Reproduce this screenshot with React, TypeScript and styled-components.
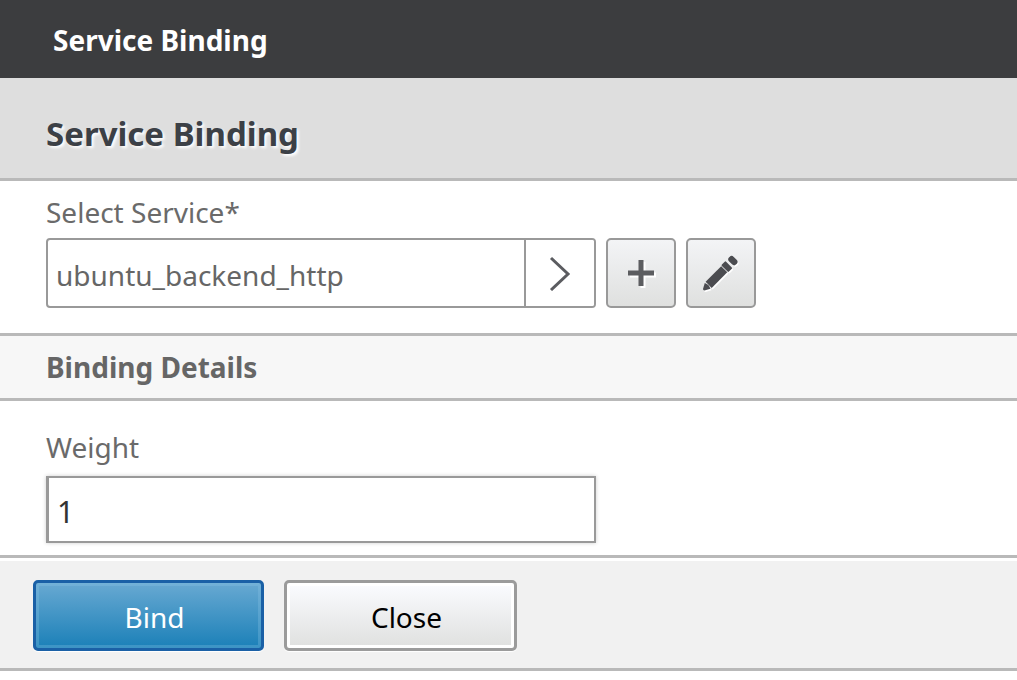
import React from 'react';
import styled, { createGlobalStyle } from 'styled-components';

const GlobalStyle = createGlobalStyle`
  *, *::before, *::after { box-sizing: border-box; }
  body {
    margin: 0;
    background: #fff;
    color: #666;
    font-family: 'Segoe UI', 'Noto Sans', sans-serif;
    font-size: 28px;
    line-height: 38px;
  }
  h1, h2, p { margin: 0; }
  button, input { font: inherit; }
`;

const TopBar = styled.header`
  padding: 21px 53px 19px;
  background: #3c3d3f;
  color: #fff;
  font-size: 28px;
  font-weight: 700;
`;

const TitleBand = styled.div`
  padding: 32px 46px 20px;
  background: #dedede;
  border-bottom: 3px solid #b9b9b9;
`;

const Title = styled.h1`
  color: #3c4046;
  font-size: 33px;
  font-weight: 700;
  line-height: 48px;
  text-shadow: 2px 2px 3px #fff;
`;

const Section = styled.section<{ $top: number; $gap: number; $bottom: number }>`
  display: flex;
  flex-direction: column;
  align-items: flex-start;
  gap: ${(p) => p.$gap}px;
  padding: ${(p) => p.$top}px 46px ${(p) => p.$bottom}px;
  border-bottom: 3px solid #b9b9b9;
`;

const Label = styled.label`
  color: #6a6a6a;
`;

const FieldRow = styled.div`
  display: flex;
  gap: 10px;
`;

const Picker = styled.div`
  display: flex;
  width: 550px;
  height: 70px;
  border: 2px solid #999;
  border-radius: 4px;
  background: #fff;
  overflow: hidden;
`;

const PickerInput = styled.input`
  flex: 1;
  min-width: 0;
  padding: 4px 8px 0;
  border: 0;
  background: transparent;
  color: #666;
  outline: none;
`;

const PickerButton = styled.button`
  display: grid;
  place-items: center;
  width: 70px;
  padding: 0;
  border: 0;
  border-left: 2px solid #999;
  background: #fff;
`;

const IconButton = styled.button`
  display: grid;
  place-items: center;
  width: 70px;
  height: 70px;
  padding: 0;
  border: 2px solid #999;
  border-radius: 5px;
  background: linear-gradient(#f3f4f6, #dfe0df);
`;

const SubHeading = styled.h2`
  padding: 12px 46px;
  border-bottom: 3px solid #b9b9b9;
  background: #f7f7f7;
  color: #666;
  font-size: 28px;
  font-weight: 700;
  line-height: 38px;
`;

const TextInput = styled.input`
  width: 550px;
  height: 67px;
  padding: 4px 8px 0;
  border: 2px solid #999;
  border-left-width: 3px;
  background: #fff;
  color: #333;
  font-size: 30px;
  box-shadow: 0 0 4px rgba(0, 0, 0, 0.2);
  outline: none;
`;

const Footer = styled.footer`
  display: flex;
  gap: 20px;
  padding: 19px 33px 17px;
  border-top: 3px solid #fff;
  border-bottom: 3px solid #b9b9b9;
  background: #f1f1f1;
`;

const ActionButton = styled.button<{ $primary?: boolean }>`
  width: ${(p) => (p.$primary ? 231 : 233)}px;
  height: 71px;
  padding: 2px 0 0 12px;
  border: ${(p) => (p.$primary ? '3px solid #1a60a6' : '3px solid #9b9b9b')};
  border-radius: 5px;
  background: ${(p) =>
    p.$primary ? 'linear-gradient(#68a9d2, #1b80b8)' : 'linear-gradient(#fbfcff, #dfe0df)'};
  box-shadow:
    inset 0 0 0 3px ${(p) => (p.$primary ? 'rgba(140, 195, 228, 0.3)' : '#fff')},
    0 1px 1px #fff;
  color: ${(p) => (p.$primary ? '#fff' : '#000')};
`;

export default function App() {
  return (
    <>
      <GlobalStyle />
      <TopBar>Service Binding</TopBar>
      <main>
        <TitleBand>
          <Title>Service Binding</Title>
        </TitleBand>
        <Section $top={12} $gap={7} $bottom={25}>
          <Label htmlFor="service">Select Service*</Label>
          <FieldRow>
            <Picker>
              <PickerInput id="service" defaultValue="ubuntu_backend_http" />
              <PickerButton type="button" aria-label="Choose service">
                <svg width="22" height="36" viewBox="0 0 22 36" fill="none" stroke="#5b5c60" strokeWidth="3">
                  <path d="M2 3 L19 19 L2 35" />
                </svg>
              </PickerButton>
            </Picker>
            <IconButton type="button" aria-label="Add service">
              <svg width="30" height="30" viewBox="0 0 30 30" fill="none" strokeWidth="5">
                <path d="M17 4 V30 M4 17 H30" stroke="#fff" />
                <path d="M15 2 V28 M2 15 H28" stroke="#5c5d60" />
              </svg>
            </IconButton>
            <IconButton type="button" aria-label="Edit service">
              <svg width="40" height="40" viewBox="0 0 40 40">
                <defs>
                  <g id="pencil" transform="rotate(-45)">
                    <path d="M1 -1 L6.500 -4 Q8.500 0 6.500 4 L1 1 Q0 0 1 -1 Z" />
                    <rect x="8" y="-4.300" width="22" height="8.600" />
                    <rect x="30.700" y="-5" width="6" height="10" rx="1" />
                    <rect x="39" y="-5" width="6.500" height="10" rx="3" />
                  </g>
                </defs>
                <use href="#pencil" x="3" y="39" fill="#fff" />
                <use href="#pencil" x="2" y="37.500" fill="#4b4c50" />
              </svg>
            </IconButton>
          </FieldRow>
        </Section>
        <SubHeading>Binding Details</SubHeading>
        <Section $top={27} $gap={10} $bottom={12}>
          <Label htmlFor="weight">Weight</Label>
          <TextInput id="weight" defaultValue="1" />
        </Section>
      </main>
      <Footer>
        <ActionButton type="button" $primary>Bind</ActionButton>
        <ActionButton type="button">Close</ActionButton>
      </Footer>
    </>
  );
}
